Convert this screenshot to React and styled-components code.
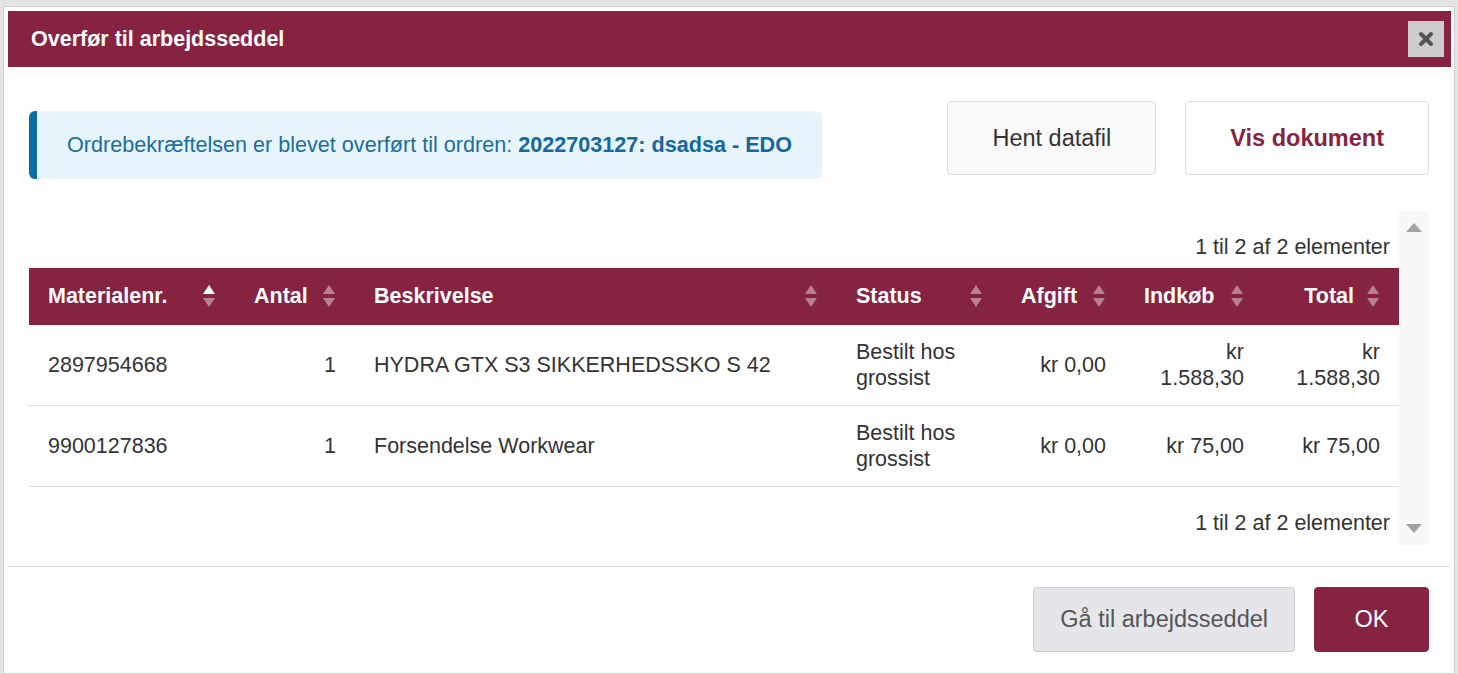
import React from 'react'
import styled, { createGlobalStyle } from 'styled-components'

const GlobalStyle = createGlobalStyle`
    html, body {
        margin: 0;
        padding: 0;
        background: #e4e4e4;
        font-family: "Liberation Sans", Arial, sans-serif;
        overflow: hidden;
    }
    * {
        box-sizing: border-box;
    }
`

const MAROON = '#862341'

const rows = [
    { nr: '2897954668', antal: '1', text: 'HYDRA GTX S3 SIKKERHEDSSKO S 42', status: 'Bestilt hos grossist', afgift: 'kr 0,00', indkob: 'kr 1.588,30', total: 'kr 1.588,30' },
    { nr: '9900127836', antal: '1', text: 'Forsendelse Workwear', status: 'Bestilt hos grossist', afgift: 'kr 0,00', indkob: 'kr 75,00', total: 'kr 75,00' },
]

const columns = [
    { label: 'Materialenr.', width: 206, active: true },
    { label: 'Antal', width: 120 },
    { label: 'Beskrivelse', width: 482 },
    { label: 'Status', width: 165 },
    { label: 'Afgift', width: 123 },
    { label: 'Indkøb', width: 138 },
    { label: 'Total', width: 136, end: true },
]

function SortIcon({ active }) {
    return (
        <SortBox>
            <Tri $up $on={active} />
            <Tri />
        </SortBox>
    )
}

function App() {
    return (
        <Page>
            <GlobalStyle />
            <Modal>
                <Header>
                    <Title>Overfør til arbejdsseddel</Title>
                    <CloseButton aria-label="Luk">
                        <svg width="16" height="16" viewBox="0 0 16 16">
                            <path d="M3 3 L13 13 M13 3 L3 13" stroke="#555" strokeWidth="4" strokeLinecap="round" />
                        </svg>
                    </CloseButton>
                </Header>

                <Body>
                    <TopRow>
                        <Alert>
                            Ordrebekræftelsen er blevet overført til ordren: <b>2022703127: dsadsa - EDO</b>
                        </Alert>
                        <Actions>
                            <Button>Hent datafil</Button>
                            <Button $primary>Vis dokument</Button>
                        </Actions>
                    </TopRow>

                    <ScrollArea>
                        <ScrollContent>
                            <Info>1 til 2 af 2 elementer</Info>
                            <Table>
                                <colgroup>
                                    {columns.map((c) => (
                                        <col key={c.label} style={{ width: c.width }} />
                                    ))}
                                </colgroup>
                                <thead>
                                    <tr>
                                        {columns.map((c) => (
                                            <Th key={c.label}>
                                                <HeadInner $end={c.end}>
                                                    <span>{c.label}</span>
                                                    <SortIcon active={c.active} />
                                                </HeadInner>
                                            </Th>
                                        ))}
                                    </tr>
                                </thead>
                                <tbody>
                                    {rows.map((r) => (
                                        <tr key={r.nr}>
                                            <Td>{r.nr}</Td>
                                            <Td $num>{r.antal}</Td>
                                            <Td>{r.text}</Td>
                                            <Td>{r.status}</Td>
                                            <Td $num>{r.afgift}</Td>
                                            <Td $num>{r.indkob}</Td>
                                            <Td $num>{r.total}</Td>
                                        </tr>
                                    ))}
                                </tbody>
                            </Table>
                            <Info $bottom>1 til 2 af 2 elementer</Info>
                        </ScrollContent>
                        <ScrollTrack>
                            <Arrow $up />
                            <Arrow />
                        </ScrollTrack>
                    </ScrollArea>
                </Body>

                <Footer>
                    <FooterButton>Gå til arbejdsseddel</FooterButton>
                    <FooterButton $ok>OK</FooterButton>
                </Footer>
            </Modal>
        </Page>
    )
}

export default App

const Page = styled.div`
    height: 674px;
    padding: 6px 3px 0 3px;
`

const Modal = styled.div`
    background: #fff;
    border: 1px solid #cfcfcf;
    padding: 4px 4px 0 4px;
    height: 100%;
`

const Header = styled.div`
    display: flex;
    align-items: center;
    justify-content: space-between;
    height: 56px;
    margin-right: -1px;
    padding: 0 7px 0 23px;
    background: ${MAROON};
`

const Title = styled.h1`
    margin: 0;
    font-size: 21.5px;
    font-weight: bold;
    color: #fff;
`

const CloseButton = styled.button`
    width: 36px;
    height: 36px;
    display: flex;
    align-items: center;
    justify-content: center;
    padding: 0;
    border: none;
    background: #cccccc;
    cursor: pointer;
`

const Body = styled.div`
    padding: 34px 21px 21px 21px;
    border-bottom: 1px solid #dddddd;
`

const TopRow = styled.div`
    display: flex;
    align-items: flex-start;
    justify-content: space-between;
`

const Alert = styled.div`
    width: 793px;
    margin-top: 10px;
    padding: 21px 20px 21px 30px;
    background: #e8f4fc;
    border-left: 8px solid #0b6ea3;
    border-radius: 6px;
    color: #1a6e9f;
    font-size: 21.6px;
    line-height: 26px;

    b {
        color: #14689a;
    }
`

const Actions = styled.div`
    display: flex;
    gap: 29px;
`

const Button = styled.button`
    height: 74px;
    padding: 0 44px;
    border: 1px solid #dddddd;
    border-radius: 4px;
    background: ${(p) => (p.$primary ? '#ffffff' : '#f9f9f9')};
    color: ${(p) => (p.$primary ? MAROON : '#333333')};
    font-family: inherit;
    font-size: 23.5px;
    font-weight: ${(p) => (p.$primary ? 'bold' : 'normal')};
    cursor: pointer;
`

const ScrollArea = styled.div`
    display: flex;
    margin-top: 32px;
`

const ScrollContent = styled.div`
    flex: 1;
`

const ScrollTrack = styled.div`
    width: 30px;
    display: flex;
    flex-direction: column;
    justify-content: space-between;
    align-items: center;
    padding: 12px 0 12px;
    background: #f8f8f8;
`

const Arrow = styled.span`
    width: 0;
    height: 0;
    border-left: 8px solid transparent;
    border-right: 8px solid transparent;
    ${(p) => (p.$up ? 'border-bottom: 9px solid #a3a3a3;' : 'border-top: 9px solid #a3a3a3;')}
`

const Info = styled.div`
    padding: 23px 9px ${(p) => (p.$bottom ? '9px' : '8px')} 0;
    text-align: right;
    color: #333;
    font-size: 21.5px;
    line-height: 26px;
`

const Table = styled.table`
    width: 100%;
    table-layout: fixed;
    border-collapse: collapse;
    font-size: 21.5px;
    line-height: 26px;
    color: #333;
`

const Th = styled.th`
    padding: 15px 19px 16px;
    background: ${MAROON};
    color: #fff;
    font-weight: bold;
    text-align: left;
`

const HeadInner = styled.div`
    display: flex;
    align-items: center;
    justify-content: ${(p) => (p.$end ? 'flex-end' : 'space-between')};
    gap: 13px;
`

const SortBox = styled.span`
    display: flex;
    flex-direction: column;
    gap: 4px;
    margin-right: 1px;
`

const Tri = styled.span`
    width: 0;
    height: 0;
    border-left: 6px solid transparent;
    border-right: 6px solid transparent;
    ${(p) =>
        p.$up
            ? `border-bottom: 9px solid ${p.$on ? '#ffffff' : 'rgba(255,255,255,0.42)'};`
            : 'border-top: 9px solid rgba(255,255,255,0.42);'}
`

const Td = styled.td`
    padding: 14px 19px;
    border-bottom: 1px solid #dddddd;
    text-align: ${(p) => (p.$num ? 'right' : 'left')};
    vertical-align: middle;
`

const Footer = styled.div`
    display: flex;
    justify-content: flex-end;
    gap: 19px;
    padding: 20px 21px 20px;
`

const FooterButton = styled.button`
    height: 65px;
    min-width: 115px;
    padding: 0 26px;
    border: 1px solid ${(p) => (p.$ok ? MAROON : '#cccccc')};
    border-radius: 4px;
    background: ${(p) => (p.$ok ? MAROON : '#e6e6ea')};
    color: ${(p) => (p.$ok ? '#ffffff' : '#555555')};
    font-family: inherit;
    font-size: 23.5px;
    cursor: pointer;
`
